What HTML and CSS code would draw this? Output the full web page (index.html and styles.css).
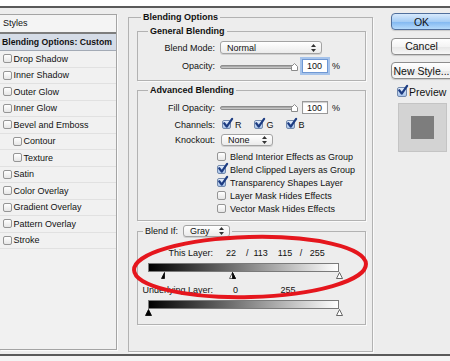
FILE: index.html
```html
<!DOCTYPE html>
<html lang="en">
<head>
  <meta charset="UTF-8" />
  <title>Layer Style</title>
  <link rel="stylesheet" href="styles.css">
</head>
<body>
  <div class="topbar"></div>

  <div class="dialog">
    <div class="styles-panel">
      <div class="styles-head">Styles</div>
      <div class="styles-current">Blending Options: Custom</div>
      <div class="styles-item"><span class="box"></span>Drop Shadow</div>
      <div class="styles-item"><span class="box"></span>Inner Shadow</div>
      <div class="styles-item"><span class="box"></span>Outer Glow</div>
      <div class="styles-item"><span class="box"></span>Inner Glow</div>
      <div class="styles-item"><span class="box"></span>Bevel and Emboss</div>
      <div class="styles-item sub"><span class="box"></span>Contour</div>
      <div class="styles-item sub"><span class="box"></span>Texture</div>
      <div class="styles-item"><span class="box"></span>Satin</div>
      <div class="styles-item"><span class="box"></span>Color Overlay</div>
      <div class="styles-item"><span class="box"></span>Gradient Overlay</div>
      <div class="styles-item"><span class="box"></span>Pattern Overlay</div>
      <div class="styles-item"><span class="box"></span>Stroke</div>
    </div>

    <fieldset class="group outer">
      <legend>Blending Options</legend>

      <fieldset class="group general">
        <legend>General Blending</legend>
        <div class="row r-mode">
          <label>Blend Mode:</label>
          <div class="popup mode">Normal
            <svg width="5" height="8" viewBox="0 0 5 8"><path d="M0 3L2.5 0L5 3ZM0 5L2.5 8L5 5Z"/></svg>
          </div>
        </div>
        <div class="row r-opacity">
          <label>Opacity:</label>
          <div class="slider">
            <div class="track"></div>
            <svg class="thumb" width="7" height="8" viewBox="0 0 7 8"><path d="M0.5 7.5V3.5L3.5 0.5L6.5 3.5V7.5Z"/></svg>
          </div>
          <input class="num focus" type="text" value="100">
          <span class="pct">%</span>
        </div>
      </fieldset>

      <fieldset class="group advanced">
        <legend>Advanced Blending</legend>
        <div class="row r-fill">
          <label>Fill Opacity:</label>
          <div class="slider">
            <div class="track"></div>
            <svg class="thumb" width="7" height="8" viewBox="0 0 7 8"><path d="M0.5 7.5V3.5L3.5 0.5L6.5 3.5V7.5Z"/></svg>
          </div>
          <input class="num" type="text" value="100">
          <span class="pct">%</span>
        </div>
        <div class="row r-channels">
          <label>Channels:</label>
          <span class="box on ch-r"><svg viewBox="0 0 10 10"><path d="M2 4.8L4.3 7.8L9.2 0.8"/></svg></span>R
          <span class="box on ch-g"><svg viewBox="0 0 10 10"><path d="M2 4.8L4.3 7.8L9.2 0.8"/></svg></span>G
          <span class="box on ch-b"><svg viewBox="0 0 10 10"><path d="M2 4.8L4.3 7.8L9.2 0.8"/></svg></span>B
        </div>
        <div class="row r-knock">
          <label>Knockout:</label>
          <div class="popup knock">None
            <svg width="5" height="8" viewBox="0 0 5 8"><path d="M0 3L2.5 0L5 3ZM0 5L2.5 8L5 5Z"/></svg>
          </div>
        </div>
        <ul class="checks">
          <li><span class="box"></span>Blend Interior Effects as Group</li>
          <li><span class="box on"><svg viewBox="0 0 10 10"><path d="M2 4.8L4.3 7.8L9.2 0.8"/></svg></span>Blend Clipped Layers as Group</li>
          <li><span class="box on"><svg viewBox="0 0 10 10"><path d="M2 4.8L4.3 7.8L9.2 0.8"/></svg></span>Transparency Shapes Layer</li>
          <li><span class="box"></span>Layer Mask Hides Effects</li>
          <li><span class="box"></span>Vector Mask Hides Effects</li>
        </ul>
      </fieldset>

      <fieldset class="group blendif">
        <legend><span>Blend If:</span>
          <span class="popup gray">Gray
            <svg width="5" height="8" viewBox="0 0 5 8"><path d="M0 3L2.5 0L5 3ZM0 5L2.5 8L5 5Z"/></svg>
          </span>
        </legend>
        <div class="row r-this">
          <label>This Layer:</label>
          <span class="vals this">22    /  113    115   /   255</span>
        </div>
        <div class="ramp"></div>
        <div class="handles">
          <svg class="handle" style="left: 8.6%" width="7" height="7" viewBox="0 0 7 7"><path class="dark" d="M3.5 0.5L3.5 6.5L0.5 6.5Z"/></svg>
          <svg class="handle" style="left: 44.3%" width="7" height="7" viewBox="0 0 7 7"><path class="light" d="M3.5 0.5L6.5 6.5H0.5Z"/><path class="dark" d="M3.5 0.5L6.5 6.5H3.5Z"/></svg>
          <svg class="handle" style="left: 100%" width="7" height="7" viewBox="0 0 7 7"><path class="light" d="M3.5 0.5L6.5 6.5H0.5Z"/></svg>
        </div>
        <div class="row r-under">
          <label>Underlying Layer:</label>
          <span class="vals under">0                 255</span>
        </div>
        <div class="ramp"></div>
        <div class="handles">
          <svg class="handle" style="left: 0%" width="7" height="7" viewBox="0 0 7 7"><path class="dark" d="M3.5 0.5L6.5 6.5H0.5Z"/></svg>
          <svg class="handle" style="left: 100%" width="7" height="7" viewBox="0 0 7 7"><path class="light" d="M3.5 0.5L6.5 6.5H0.5Z"/></svg>
        </div>
      </fieldset>
    </fieldset>

    <div class="actions">
      <button class="btn default">OK</button>
      <button class="btn">Cancel</button>
      <button class="btn">New Style...</button>
      <div class="preview">
        <span class="box on"><svg viewBox="0 0 10 10"><path d="M2 4.8L4.3 7.8L9.2 0.8"/></svg></span>Preview
      </div>
      <div class="swatch"><div class="swatch-inner"></div></div>
    </div>
  </div>

  <div class="bottombar"></div>

  <!-- red marker drawn over the Blend If sliders -->
  <svg class="mark" width="450" height="361" viewBox="0 0 450 361">
    <ellipse cx="250" cy="267" rx="116" ry="30" transform="rotate(-1.5 250 267)"/>
  </svg>
</body>
</html>
```

FILE: styles.css
```css
* {
  box-sizing: border-box;
}
body {
  margin: 0;
  width: 450px;
  height: 361px;
  overflow: hidden;
  position: relative;
  background: #ededed;
  font-family: "Liberation Sans", Arial, sans-serif;
  font-size: 9px;
  color: #111;
}
.topbar {
  height: 8px;
  background: #fff;
  border-bottom: 2px solid #5a5a5a;
}
.dialog {
  display: flex;
  align-items: flex-start;
  height: 346px;
  background: #ededed;
}
.bottombar {
  height: 7px;
  background: #f4f4f4;
  border-top: 2px solid #5a5a5a;
}

/* styles list */
.styles-panel {
  flex: none;
  margin-top: 6px;
  width: 117px;
  height: 336px;
  background: #f1f1f1;
  border: 1px solid #a4a4a4;
  border-left: none;
  box-shadow: 1px 1px 0 #fbfbfb;
}
.styles-head {
  height: 17px;
  line-height: 17px;
  padding-left: 3px;
  background: #f4f4f4;
}
.styles-current {
  height: 19px;
  line-height: 16px;
  padding-left: 2px;
  font-size: 8.7px;
  font-weight: bold;
  white-space: nowrap;
  overflow: hidden;
  background: #d5dce7;
  border-top: 2px solid #7d7d7d;
  border-bottom: 1px solid #a3aab5;
}
.styles-item {
  height: 16.5px;
  display: flex;
  align-items: center;
  padding-left: 3px;
  white-space: nowrap;
  border-bottom: 1px solid #e1e1e1;
}
.styles-item.sub {
  padding-left: 13px;
}
.styles-item .box {
  margin-right: 1.5px;
}

/* checkboxes */
.box {
  position: relative;
  display: inline-block;
  flex: none;
  width: 9px;
  height: 9px;
  border: 1px solid #959595;
  border-radius: 2px;
  background: linear-gradient(#ffffff, #e6e6e6);
}
.box.on {
  background: linear-gradient(#e3edfb, #a9c4ea);
  border-color: #7289ad;
}
.box svg {
  position: absolute;
  left: -1px;
  top: -3px;
  width: 11px;
  height: 11px;
  overflow: visible;
}
.box svg path {
  fill: none;
  stroke: #1d3c82;
  stroke-width: 2;
  stroke-linecap: round;
  stroke-linejoin: round;
}

/* group boxes */
.group {
  margin: 0;
  min-width: 0;
  border: 1px solid #b2b2b2;
  box-shadow: 1px 1px 0 #fafafa;
  padding: 0;
}
.group legend {
  padding: 0 2px;
  line-height: 11px;
  font-weight: bold;
}
.outer {
  flex: none;
  margin: 4px 0 0 11px;
  width: 245px;
  height: 340px;
  padding: 0 6px 0 8px;
}
.outer > legend {
  margin-left: 4px;
}
.general,
.advanced,
.blendif {
  margin-top: 3px;
  padding-bottom: 7px;
}
.general > legend,
.advanced > legend {
  margin-left: 10px;
}
.general {
  padding-top: 4px;
}
.advanced {
  margin-top: 4px;
  padding-top: 5px;
  padding-bottom: 5px;
}

.row {
  display: flex;
  align-items: center;
}
.row label {
  width: 77px;
  flex: none;
  text-align: right;
  margin-right: 5px;
}
.r-mode { height: 13px; }
.r-opacity { height: 14px; margin-top: 5px; }
.r-fill { height: 13px; }
.r-channels { height: 11px; margin-top: 5px; }
.r-knock { height: 12px; margin-top: 4px; }

/* popup menus */
.popup {
  display: inline-flex;
  align-items: center;
  justify-content: space-between;
  height: 13px;
  padding: 0 5px 0 6px;
  font-weight: normal;
  border: 1px solid #a3a3a3;
  border-radius: 3px;
  background: linear-gradient(#ffffff, #ebebeb);
  box-shadow: 0 1px 0 #d0d0d0;
}
.popup svg path {
  fill: #333;
}
.popup.mode { width: 102px; }
.popup.knock { width: 52px; height: 12px; margin-left: 1px; }
.popup.gray { width: 47px; height: 12px; margin-left: 5px; }

/* sliders */
.slider {
  display: flex;
  align-items: flex-end;
  width: 79px;
  height: 9px;
}
.track {
  width: 75px;
  height: 4px;
  margin-bottom: 2px;
  border-radius: 2px;
  border: 1px solid #8d8d8d;
  background: linear-gradient(#9b9b9b, #d3d3d3);
}
.thumb {
  margin-left: -4px;
}
.thumb path {
  fill: #fff;
  stroke: #8a8a8a;
}
.num {
  width: 26px;
  height: 14px;
  margin: 0 0 0 3px;
  padding: 0 0 0 4px;
  font: inherit;
  color: #111;
  background: #fff;
  border: 1px solid #999;
  box-shadow: inset 0 1px 1px rgba(0, 0, 0, 0.2);
  outline: none;
}
.r-fill .num {
  height: 13px;
}
.num.focus {
  border-color: #6f98d4;
  box-shadow: 0 0 0 2px #a6c3ea;
}
.pct {
  margin-left: 4px;
}

.ch-r { margin: 0 4px 0 2px; }
.ch-g { margin: 0 4px 0 12px; }
.ch-b { margin: 0 4px 0 12px; }

.checks {
  list-style: none;
  margin: 4px 0 0 79px;
  padding: 0;
}
.checks li {
  display: flex;
  align-items: center;
  height: 13px;
  white-space: nowrap;
}
.checks .box {
  margin-right: 4px;
}

/* blend if */
.blendif {
  margin-top: 4px;
  padding-bottom: 8px;
}
.blendif > legend {
  margin-left: 5px;
  line-height: 12px;
  font-weight: normal;
  display: flex;
  align-items: center;
}
.r-this {
  height: 10px;
  margin-top: 11px;
}
.r-under {
  height: 10px;
  margin-top: 6px;
}
.r-this label,
.r-under label {
  margin-right: 0;
  width: 75px;
}
.vals {
  white-space: pre;
}
.vals.this { padding-left: 13px; }
.vals.under { padding-left: 20px; }
.ramp {
  width: 191px;
  height: 9px;
  margin: 5px 0 0 10px;
  border: 1px solid #7a7a7a;
  background: linear-gradient(to right, #000, #fff);
}
.handles {
  position: relative;
  width: 191px;
  height: 7px;
  margin-left: 10px;
}
.handle {
  position: absolute;
  top: 0;
  margin-left: -3.5px;
}
.handle .dark {
  fill: #000;
  stroke: #000;
  stroke-width: 0.8;
}
.handle .light {
  fill: #fff;
  stroke: #444;
  stroke-width: 0.8;
}

/* buttons column */
.actions {
  flex: none;
  margin: 5px 0 0 18px;
  width: 64px;
  display: flex;
  flex-direction: column;
}
.btn {
  height: 17px;
  width: 64px;
  margin: 0 0 7.5px;
  padding: 0 3px 0 0;
  font: inherit;
  font-size: 10.5px;
  color: #111;
  border: 1px solid #8d8d8d;
  border-radius: 4px;
  background: linear-gradient(#ffffff, #f4f4f4 50%, #e6e6e6 51%, #f7f7f7);
  box-shadow: 0 1px 1px rgba(0, 0, 0, 0.15);
}
.btn.default {
  border-color: #506f9c;
  background: linear-gradient(#d8eafc, #a6cdf5 50%, #7fb6f0 51%, #b5dafb);
}
.preview {
  display: flex;
  align-items: center;
  height: 12px;
  margin: -1px 0 0 6px;
  font-size: 10.5px;
}
.preview .box {
  width: 10px;
  height: 10px;
  margin-right: 2px;
}
.swatch {
  width: 49px;
  height: 49px;
  margin: 5px 0 0 7px;
  background: #d3d3d3;
  border: 1px solid #c4c4c4;
  display: flex;
  align-items: center;
  justify-content: center;
}
.swatch-inner {
  width: 23px;
  height: 23px;
  background: #7d7d7d;
}

/* annotation */
.mark {
  position: absolute;
  left: 0;
  top: 0;
  pointer-events: none;
}
.mark ellipse {
  fill: none;
  stroke: #e5161d;
  stroke-width: 4;
}
```
